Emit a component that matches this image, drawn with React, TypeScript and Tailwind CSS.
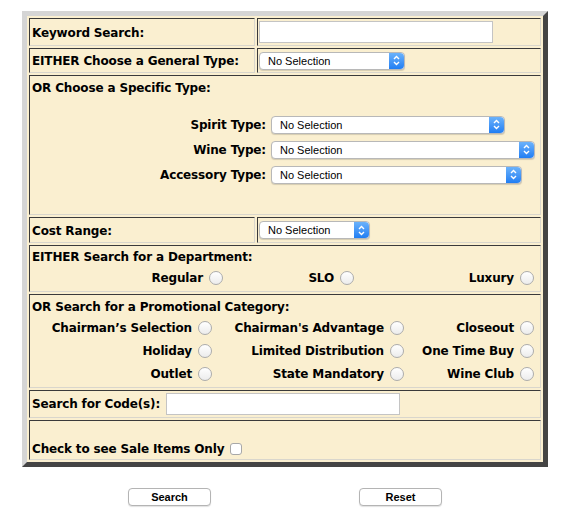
import React from 'react'

const cell = 'border border-t-[#3a3a3a] border-l-[#3a3a3a] border-r-[#d9d6cc] border-b-[#d9d6cc]'
const label = "text-[12px] leading-[16px] font-bold tracking-[-0.15px] text-black font-['DejaVu_Sans',sans-serif]"

function Select({ className }: { className: string }) {
  return (
    <div className={`flex h-[18px] rounded-[4px] border border-[#b8b8b8] bg-white shadow-[0_1px_1px_rgba(0,0,0,0.15)] ${className}`}>
      <span className="flex-1 pl-[8px] text-[11px] leading-[16px] text-black font-['Liberation_Sans',sans-serif]">No Selection</span>
      <span className="flex w-[15px] items-center justify-center rounded-r-[4px] bg-gradient-to-b from-[#6ab2fb] to-[#1f7ef3]">
        <svg width="7" height="11" viewBox="0 0 7 11" fill="none" stroke="white" strokeWidth="1.4">
          <path d="M1 4 L3.5 1.5 L6 4" />
          <path d="M1 7 L3.5 9.5 L6 7" />
        </svg>
      </span>
    </div>
  )
}

function Radio() {
  return <span className="inline-block h-[14px] w-[14px] rounded-full border border-[#acacac] bg-gradient-to-b from-white to-[#ececec]" />
}

function Opt({ text }: { text: string }) {
  return (
    <div className="flex items-center justify-end gap-[6px]">
      <span className={label}>{text}</span>
      <Radio />
    </div>
  )
}

export default function App() {
  return (
    <div className="min-h-[527px] bg-white">
      <div className="ml-[22px] pt-[11px]">
        <div className="w-[526px] border-[5px] border-t-[#d5d5d5] border-l-[#d5d5d5] border-r-[#444444] border-b-[#444444] bg-[#faefd0] p-[2px] flex flex-col gap-[2px]">
          <div className="flex gap-[2px] h-[28px]">
            <div className={`${cell} w-[226px] flex items-center px-[2px] pt-[1px]`}>
              <span className={label}>Keyword Search:</span>
            </div>
            <div className={`${cell} flex-1 flex items-center px-[1px]`}>
              <div className="h-[22px] w-[234px] border border-[#c4c4c4] bg-white" />
            </div>
          </div>
          <div className="flex gap-[2px] h-[25px]">
            <div className={`${cell} w-[226px] flex items-center px-[2px] pt-[1px]`}>
              <span className={label}>EITHER Choose a General Type:</span>
            </div>
            <div className={`${cell} flex-1 flex items-center px-[1px]`}>
              <Select className="w-[146px]" />
            </div>
          </div>
          <div className={`${cell} h-[140px] px-[2px] pt-[4px]`}>
            <div className={label}>OR Choose a Specific Type:</div>
            <div className="mt-[16px] grid grid-cols-[234px_auto] gap-x-[5px]">
              <div className={`${label} h-[25px] flex items-center justify-end`}>Spirit Type:</div>
              <div className="h-[25px] flex items-center"><Select className="w-[234px]" /></div>
              <div className={`${label} h-[25px] flex items-center justify-end`}>Wine Type:</div>
              <div className="h-[25px] flex items-center"><Select className="w-[264px]" /></div>
              <div className={`${label} h-[25px] flex items-center justify-end`}>Accessory Type:</div>
              <div className="h-[25px] flex items-center"><Select className="w-[251px]" /></div>
            </div>
          </div>
          <div className="flex gap-[2px] h-[26px]">
            <div className={`${cell} w-[226px] flex items-center px-[2px] pt-[1px]`}>
              <span className={label}>Cost Range:</span>
            </div>
            <div className={`${cell} flex-1 flex items-center px-[1px]`}>
              <Select className="w-[111px]" />
            </div>
          </div>
          <div className={`${cell} h-[47px] px-[2px] pt-[3px]`}>
            <div className={label}>EITHER Search for a Department:</div>
            <div className="grid grid-cols-[191px_131px_180px] h-[26px] items-center">
              <Opt text="Regular" />
              <Opt text="SLO" />
              <Opt text="Luxury" />
            </div>
          </div>
          <div className={`${cell} h-[94px] px-[2px] pt-[4px]`}>
            <div className={label}>OR Search for a Promotional Category:</div>
            <div className="mt-[1px] grid grid-cols-[180px_192px_130px] auto-rows-[23px] items-center">
              <Opt text="Chairman’s Selection" />
              <Opt text="Chairman's Advantage" />
              <Opt text="Closeout" />
              <Opt text="Holiday" />
              <Opt text="Limited Distribution" />
              <Opt text="One Time Buy" />
              <Opt text="Outlet" />
              <Opt text="State Mandatory" />
              <Opt text="Wine Club" />
            </div>
          </div>
          <div className={`${cell} h-[28px] flex items-center gap-[6px] px-[2px]`}>
            <span className={label}>Search for Code(s):</span>
            <div className="h-[22px] w-[234px] border border-[#c4c4c4] bg-white" />
          </div>
          <div className={`${cell} h-[40px] flex items-end gap-[6px] px-[2px] pb-[2px]`}>
            <span className={label}>Check to see Sale Items Only</span>
            <span className="mb-[2px] inline-block h-[12px] w-[12px] rounded-[3px] border border-[#a8a8a8] bg-white" />
          </div>
        </div>
      </div>
      <div className="mt-[21px] flex">
        <button className="ml-[128px] h-[18px] w-[83px] rounded-[4px] border border-[#b4b4b4] bg-white text-[11px] leading-[16px] font-bold text-black font-['Liberation_Sans',sans-serif] shadow-[0_1px_1px_rgba(0,0,0,0.12)]">Search</button>
        <button className="ml-[148px] h-[18px] w-[83px] rounded-[4px] border border-[#b4b4b4] bg-white text-[11px] leading-[16px] font-bold text-black font-['Liberation_Sans',sans-serif] shadow-[0_1px_1px_rgba(0,0,0,0.12)]">Reset</button>
      </div>
    </div>
  )
}
